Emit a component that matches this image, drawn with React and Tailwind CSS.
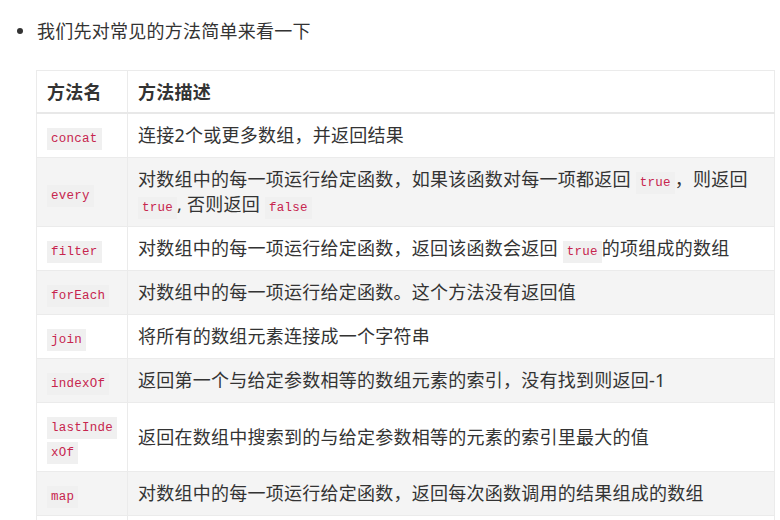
import React from 'react';

const C = ({ children, wrap }) => (
  <code
    className={
      'bg-[#f0f0f0] text-[#c7254e] px-[4px] py-[4px] text-[12.5px] leading-none font-[\'DejaVu_Sans_Mono\',\'Liberation_Mono\',monospace] [box-decoration-break:clone] ' +
      (wrap ? 'break-all' : 'whitespace-nowrap')
    }
  >
    {children}
  </code>
);

const rows = [
  { name: 'concat', desc: <>连接2个或更多数组，并返回结果</> },
  {
    name: 'every',
    desc: (
      <>
        对数组中的每一项运行给定函数，如果该函数对每一项都返回 <C>true</C>，则返回 <C>true</C>, 否则返回 <C>false</C>
      </>
    ),
  },
  { name: 'filter', desc: <>对数组中的每一项运行给定函数，返回该函数会返回 <C>true</C>的项组成的数组</> },
  { name: 'forEach', desc: <>对数组中的每一项运行给定函数。这个方法没有返回值</> },
  { name: 'join', desc: <>将所有的数组元素连接成一个字符串</> },
  { name: 'indexOf', desc: <>返回第一个与给定参数相等的数组元素的索引，没有找到则返回-1</> },
  { name: 'lastIndexOf', desc: <>返回在数组中搜索到的与给定参数相等的元素的索引里最大的值</> },
  { name: 'map', desc: <>对数组中的每一项运行给定函数，返回每次函数调用的结果组成的数组</> },
  { name: 'reverse', desc: <>颠倒数组中元素的顺序</> },
];

export default function App() {
  return (
    <div className="min-h-screen bg-white text-[#333] text-[18px] tracking-[0.25px] font-['Noto_Sans','Noto_Sans_CJK_SC',sans-serif] pt-[18px]">
      <div className="flex items-center h-[26px] leading-[26px]">
        <span className="ml-[17px] w-[6px] h-[6px] rounded-full bg-[#333]" />
        <span className="ml-[14px]">我们先对常见的方法简单来看一下</span>
      </div>

      <table className="ml-[36px] mt-[26px] w-[739px] table-fixed border-collapse">
        <colgroup>
          <col className="w-[91px]" />
          <col />
        </colgroup>
        <thead>
          <tr className="bg-white">
            <th className="text-left font-bold px-[10px] py-[7.5px] leading-[26px] border border-[#ebebeb] border-b-2 border-b-[#e8e8e8]">方法名</th>
            <th className="text-left font-bold px-[10px] py-[7.5px] leading-[26px] border border-[#ebebeb] border-b-2 border-b-[#e8e8e8]">方法描述</th>
          </tr>
        </thead>
        <tbody>
          {rows.map((r, i) => (
            <tr key={r.name} className={i % 2 === 1 ? 'bg-[#f4f4f4]' : 'bg-white'}>
              <td className="align-middle pl-[10px] pr-[13px] py-[9px] leading-[25px] border border-[#ebebeb]">
                <C wrap>{r.name}</C>
              </td>
              <td className="align-middle px-[10px] py-[9px] leading-[25px] border border-[#ebebeb]">{r.desc}</td>
            </tr>
          ))}
        </tbody>
      </table>
    </div>
  );
}
